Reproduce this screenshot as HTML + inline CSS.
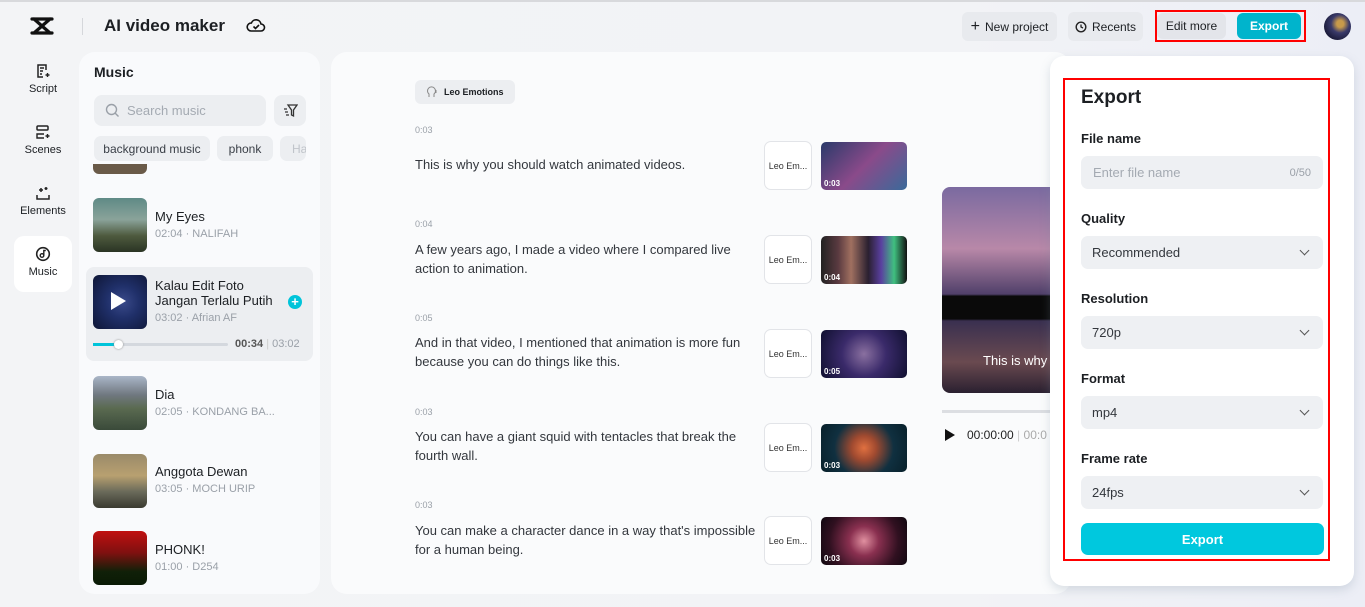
<!DOCTYPE html>
<html><head><meta charset="utf-8"><style>
*{box-sizing:border-box;margin:0;padding:0}
body{width:1365px;height:607px;overflow:hidden;font-family:"Liberation Sans",sans-serif;background:linear-gradient(90deg,#f3f4f6 0%,#f2f3f6 70%,#eceef6 100%);position:relative;color:#1c1f23}
.a{position:absolute}
.btn{position:absolute;background:#e8eaee;border-radius:6px;font-size:12px;display:flex;align-items:center;justify-content:center;color:#1c1f23}
.nav{position:absolute;left:14px;width:58px;text-align:center;font-size:11px}
.nav svg{display:block;margin:0 auto 4px}
.tag{position:absolute;top:136px;height:25px;background:#eceef1;border-radius:7px;font-size:12px;color:#3a3f47;display:flex;align-items:center;justify-content:center}
.th{position:absolute;left:93px;width:54px;height:54px;border-radius:6px}
.tt{position:absolute;left:155px;font-size:13px;color:#1c1f23}
.ts{position:absolute;left:155px;font-size:11px;color:#9aa0a8}
.tm{position:absolute;left:415px;font-size:9px;color:#9aa0a8}
.tx{position:absolute;left:415px;font-size:13px;color:#33373d;line-height:19px;width:345px}
.le{position:absolute;left:764px;width:48px;height:49px;border:1px solid #e2e4e8;border-radius:7px;background:#fff;font-size:9px;display:flex;align-items:center;justify-content:center;color:#333}
.vt{position:absolute;left:821px;width:86px;height:48px;border-radius:5px;overflow:hidden;background:#111}
.vt span{position:absolute;left:3px;bottom:2px;color:#fff;font-size:8px;font-weight:bold}
.lb{position:absolute;left:1081px;font-size:13px;font-weight:bold;color:#1c1f23}
.sel,.inp{position:absolute;left:1081px;width:242px;height:33px;background:#eef0f3;border-radius:7px;font-size:13px;color:#33373d;padding-left:11px;display:flex;align-items:center}
.sel:after{content:"";position:absolute;right:15px;top:11px;width:6px;height:6px;border-right:1.3px solid #555;border-bottom:1.3px solid #555;transform:rotate(45deg)}
</style></head><body>
<div class="a" style="left:0;top:0;width:1365px;height:2px;background:#d8d9dc"></div>
<svg class="a" style="left:30px;top:16px" width="24" height="20" viewBox="0 0 24 20"><path d="M2 3h20M2 17h20M4 3l16 14M20 3L4 17" stroke="#111" stroke-width="3.2" fill="none" stroke-linecap="round"/></svg>
<div class="a" style="left:82px;top:18px;width:1px;height:17px;background:#d5d7db"></div>
<div class="a" style="left:104px;top:16px;font-size:17px;font-weight:bold">AI video maker</div>
<svg class="a" style="left:246px;top:17px" width="20" height="17" viewBox="0 0 20 17"><path d="M5 14h10a3.5 3.5 0 0 0 0-7 5 5 0 0 0-9.6-1A4 4 0 0 0 5 14z" stroke="#111" stroke-width="1.6" fill="none"/><path d="M7.5 9.5l2 2 3.5-3.5" stroke="#111" stroke-width="1.6" fill="none"/></svg>
<div class="btn" style="left:962px;top:12px;width:95px;height:29px"><span style="font-size:16px;margin-right:5px">+</span>New project</div>
<div class="btn" style="left:1068px;top:12px;width:75px;height:29px"><svg width="12" height="12" viewBox="0 0 12 12" style="margin-right:5px"><circle cx="6" cy="6" r="4.8" stroke="#222" stroke-width="1.4" fill="none"/><path d="M6 3.5V6l2 1" stroke="#222" stroke-width="1.3" fill="none"/></svg>Recents</div>
<div class="a" style="left:1155px;top:10px;width:151px;height:32px;border:2px solid #f00"></div>
<div class="btn" style="left:1157px;top:13px;width:69px;height:26px;background:#e3e5ea">Edit more</div>
<div class="btn" style="left:1237px;top:13px;width:64px;height:26px;background:#00b4cc;color:#fff;font-weight:bold">Export</div>
<div class="a" style="left:1324px;top:13px;width:27px;height:27px;border-radius:50%;background:radial-gradient(circle at 60% 40%,#c89a4a 0 15%,#3a3a6a 40%,#151530 80%)"></div>
<div class="nav" style="top:63px"><svg width="16" height="16" viewBox="0 0 16 16"><path d="M11 7V2H3v12h5M5 5h4M5 8h3M5 11h2" stroke="#222" stroke-width="1.5" fill="none"/><path d="M12.5 10v4M10.5 12h4" stroke="#222" stroke-width="1.4"/></svg>Script</div>
<div class="nav" style="top:124px"><svg width="16" height="16" viewBox="0 0 16 16"><rect x="2" y="2" width="11" height="4" rx="1" stroke="#222" stroke-width="1.5" fill="none"/><path d="M9 10H2v4h7M12.5 10v4M10.5 12h4" stroke="#222" stroke-width="1.4" fill="none"/></svg>Scenes</div>
<div class="nav" style="top:185px"><svg width="16" height="16" viewBox="0 0 16 16"><path d="M2 10v4h12v-4M6 3v4M4 5h4M11 2v3M9.5 3.5h3" stroke="#222" stroke-width="1.5" fill="none"/></svg>Elements</div>
<div class="a" style="left:14px;top:236px;width:58px;height:56px;background:#fff;border-radius:10px"></div>
<div class="nav" style="top:246px"><svg width="16" height="16" viewBox="0 0 16 16"><circle cx="8" cy="8" r="6.3" stroke="#222" stroke-width="1.6" fill="none"/><circle cx="7" cy="9.5" r="1.8" stroke="#222" stroke-width="1.4" fill="none"/><path d="M8.8 9.5V4.5h2" stroke="#222" stroke-width="1.4" fill="none"/></svg>Music</div>
<div class="a" style="left:79px;top:52px;width:241px;height:542px;background:#f9fafc;border-radius:16px"></div>
<div class="a" style="left:94px;top:64px;font-size:14px;font-weight:bold">Music</div>
<div class="a" style="left:94px;top:95px;width:172px;height:31px;background:#eceef1;border-radius:8px;font-size:13px;color:#a4aab2;padding:8px 0 0 33px">Search music</div>
<svg class="a" style="left:105px;top:103px" width="15" height="15" viewBox="0 0 15 15"><circle cx="6.5" cy="6.5" r="5" stroke="#9aa0a8" stroke-width="1.4" fill="none"/><path d="M10 10l3.5 3.5" stroke="#9aa0a8" stroke-width="1.4"/></svg>
<div class="a" style="left:274px;top:95px;width:32px;height:31px;background:#eceef1;border-radius:8px"></div>
<svg class="a" style="left:283px;top:104px" width="15" height="14" viewBox="0 0 15 14"><path d="M5 1h9l-3.5 5v6l-2-1V6z M1 5h3M2 8h3M3 11h3" stroke="#333" stroke-width="1.3" fill="none"/></svg>
<div class="tag" style="left:94px;width:116px">background music</div>
<div class="tag" style="left:217px;width:56px">phonk</div>
<div class="tag" style="left:280px;width:26px;color:#c0c4ca;justify-content:flex-start;padding-left:12px;overflow:hidden">Ha</div>
<div class="a" style="left:93px;top:164px;width:54px;height:10px;background:#6a5a48;border-radius:0 0 6px 6px"></div>
<div class="th" style="top:198px;background:linear-gradient(180deg,#5f8a86 0%,#8aa39a 40%,#4e5a3e 70%,#2a3424 100%)"></div>
<div class="tt" style="top:209px">My Eyes</div><div class="ts" style="top:228px">02:04 · NALIFAH</div>
<div class="a" style="left:86px;top:267px;width:227px;height:94px;background:#eceef1;border-radius:8px"></div>
<div class="th" style="top:275px;background:radial-gradient(circle at 55% 50%,#3a4a8a 0,#20306a 40%,#0e1636 100%)"></div>
<div class="a" style="left:111px;top:292px;width:0;height:0;border-left:15px solid #fff;border-top:9px solid transparent;border-bottom:9px solid transparent"></div>
<div class="tt" style="top:278px;line-height:15px">Kalau Edit Foto<br>Jangan Terlalu Putih</div>
<div class="ts" style="top:312px">03:02 · Afrian AF</div>
<div class="a" style="left:288px;top:295px;width:14px;height:14px;border-radius:50%;background:#00c4da;color:#fff;font-size:13px;line-height:13px;text-align:center;font-weight:bold">+</div>
<div class="a" style="left:93px;top:343px;width:135px;height:3px;background:#d4d8de;border-radius:2px"></div>
<div class="a" style="left:93px;top:343px;width:25px;height:3px;background:#00c4da"></div>
<div class="a" style="left:114px;top:340px;width:9px;height:9px;border-radius:50%;background:#fff;box-shadow:0 0 2px #888"></div>
<div class="a" style="left:235px;top:338px;font-size:11px;color:#555"><b>00:34</b> <span style="color:#ccc">|</span> <span style="color:#9aa0a8">03:02</span></div>
<div class="th" style="top:376px;background:linear-gradient(180deg,#aab6c8 0%,#707880 35%,#5a6a50 60%,#3a4a3a 100%)"></div>
<div class="tt" style="top:387px">Dia</div><div class="ts" style="top:406px">02:05 · KONDANG BA...</div>
<div class="th" style="top:454px;background:linear-gradient(180deg,#9a8a6a 0%,#b8a070 40%,#6a6a5a 70%,#3a3a30 100%)"></div>
<div class="tt" style="top:464px">Anggota Dewan</div><div class="ts" style="top:483px">03:05 · MOCH URIP</div>
<div class="th" style="top:531px;background:linear-gradient(180deg,#c01010 0%,#801010 40%,#102008 75%,#0a1a05 100%)"></div>
<div class="tt" style="top:542px">PHONK!</div><div class="ts" style="top:561px">01:00 · D254</div>
<div class="a" style="left:331px;top:52px;width:740px;height:542px;background:#fafbfc;border-radius:16px"></div>
<div class="a" style="left:415px;top:80px;width:100px;height:24px;background:#eceef1;border-radius:6px;font-size:9px;font-weight:bold;padding:7px 0 0 29px">Leo Emotions</div>
<svg class="a" style="left:426px;top:86px" width="12" height="12" viewBox="0 0 12 12"><path d="M3 11V8a4 4 0 1 1 5 0v3" stroke="#888" stroke-width="1" fill="none"/><path d="M10 4v3" stroke="#888"/></svg>
<div class="tm" style="top:125px">0:03</div><div class="tx" style="top:155px">This is why you should watch animated videos.</div>
<div class="tm" style="top:219px">0:04</div><div class="tx" style="top:240px">A few years ago, I made a video where I compared live action to animation.</div>
<div class="tm" style="top:313px">0:05</div><div class="tx" style="top:333px">And in that video, I mentioned that animation is more fun because you can do things like this.</div>
<div class="tm" style="top:407px">0:03</div><div class="tx" style="top:427px">You can have a giant squid with tentacles that break the fourth wall.</div>
<div class="tm" style="top:500px">0:03</div><div class="tx" style="top:521px">You can make a character dance in a way that's impossible for a human being.</div>
<div class="le" style="top:141px">Leo Em...</div><div class="le" style="top:235px">Leo Em...</div><div class="le" style="top:329px">Leo Em...</div><div class="le" style="top:423px">Leo Em...</div><div class="le" style="top:516px">Leo Em...</div>
<div class="vt" style="top:142px;background:linear-gradient(135deg,#2a3a6a,#8a4a8a 50%,#3a6a9a)"><span>0:03</span></div>
<div class="vt" style="top:236px;background:linear-gradient(90deg,#222 0,#5a3a40 20%,#a07060 35%,#2a2030 55%,#5a40a0 70%,#40c080 85%,#111 100%)"><span>0:04</span></div>
<div class="vt" style="top:330px;background:radial-gradient(circle at 50% 50%,#8a70a0 0,#3a2a6a 45%,#101030 100%)"><span>0:05</span></div>
<div class="vt" style="top:424px;background:radial-gradient(circle at 50% 50%,#e07040 0,#a04a30 25%,#103040 60%,#08202a 100%)"><span>0:03</span></div>
<div class="vt" style="top:517px;background:radial-gradient(circle at 50% 50%,#e090a0 0,#8a3050 30%,#301020 70%,#100810 100%)"><span>0:03</span></div>
<div class="a" style="left:942px;top:187px;width:120px;height:206px;border-radius:8px;overflow:hidden;background:linear-gradient(180deg,#7a6aa0 0%,#b888a8 30%,#50406a 52%,#0a0a0a 53%,#0a0a0a 64%,#3a3050 65%,#6a4a50 85%,#2a2030 100%)">
<div class="a" style="left:41px;top:166px;color:#fff;font-size:13px;white-space:nowrap">This is why</div></div>
<div class="a" style="left:942px;top:410px;width:120px;height:3px;background:#dcdee2"></div>
<div class="a" style="left:945px;top:429px;width:0;height:0;border-left:10px solid #111;border-top:6px solid transparent;border-bottom:6px solid transparent"></div>
<div class="a" style="left:967px;top:428px;font-size:12px;color:#222">00:00:00 <span style="color:#ccc">|</span> <span style="color:#aaa">00:0</span></div>
<div class="a" style="left:1050px;top:56px;width:304px;height:530px;background:#fff;border-radius:14px;box-shadow:0 4px 10px rgba(120,140,160,.25)"></div>
<div class="a" style="left:1063px;top:78px;width:267px;height:483px;border:2px solid #f00"></div>
<div class="a" style="left:1081px;top:87px;font-size:19px;font-weight:bold">Export</div>
<div class="lb" style="top:131px">File name</div>
<div class="inp" style="top:156px;color:#a4aab2;padding-left:12px">Enter file name<span style="position:absolute;right:12px;font-size:11px;color:#9aa0a8">0/50</span></div>
<div class="lb" style="top:211px">Quality</div><div class="sel" style="top:236px">Recommended</div>
<div class="lb" style="top:291px">Resolution</div><div class="sel" style="top:316px">720p</div>
<div class="lb" style="top:371px">Format</div><div class="sel" style="top:396px">mp4</div>
<div class="lb" style="top:451px">Frame rate</div><div class="sel" style="top:476px">24fps</div>
<div class="a" style="left:1081px;top:523px;width:243px;height:32px;background:#00c8de;border-radius:7px;color:#fff;font-size:13px;font-weight:bold;display:flex;align-items:center;justify-content:center">Export</div>
</body></html>
